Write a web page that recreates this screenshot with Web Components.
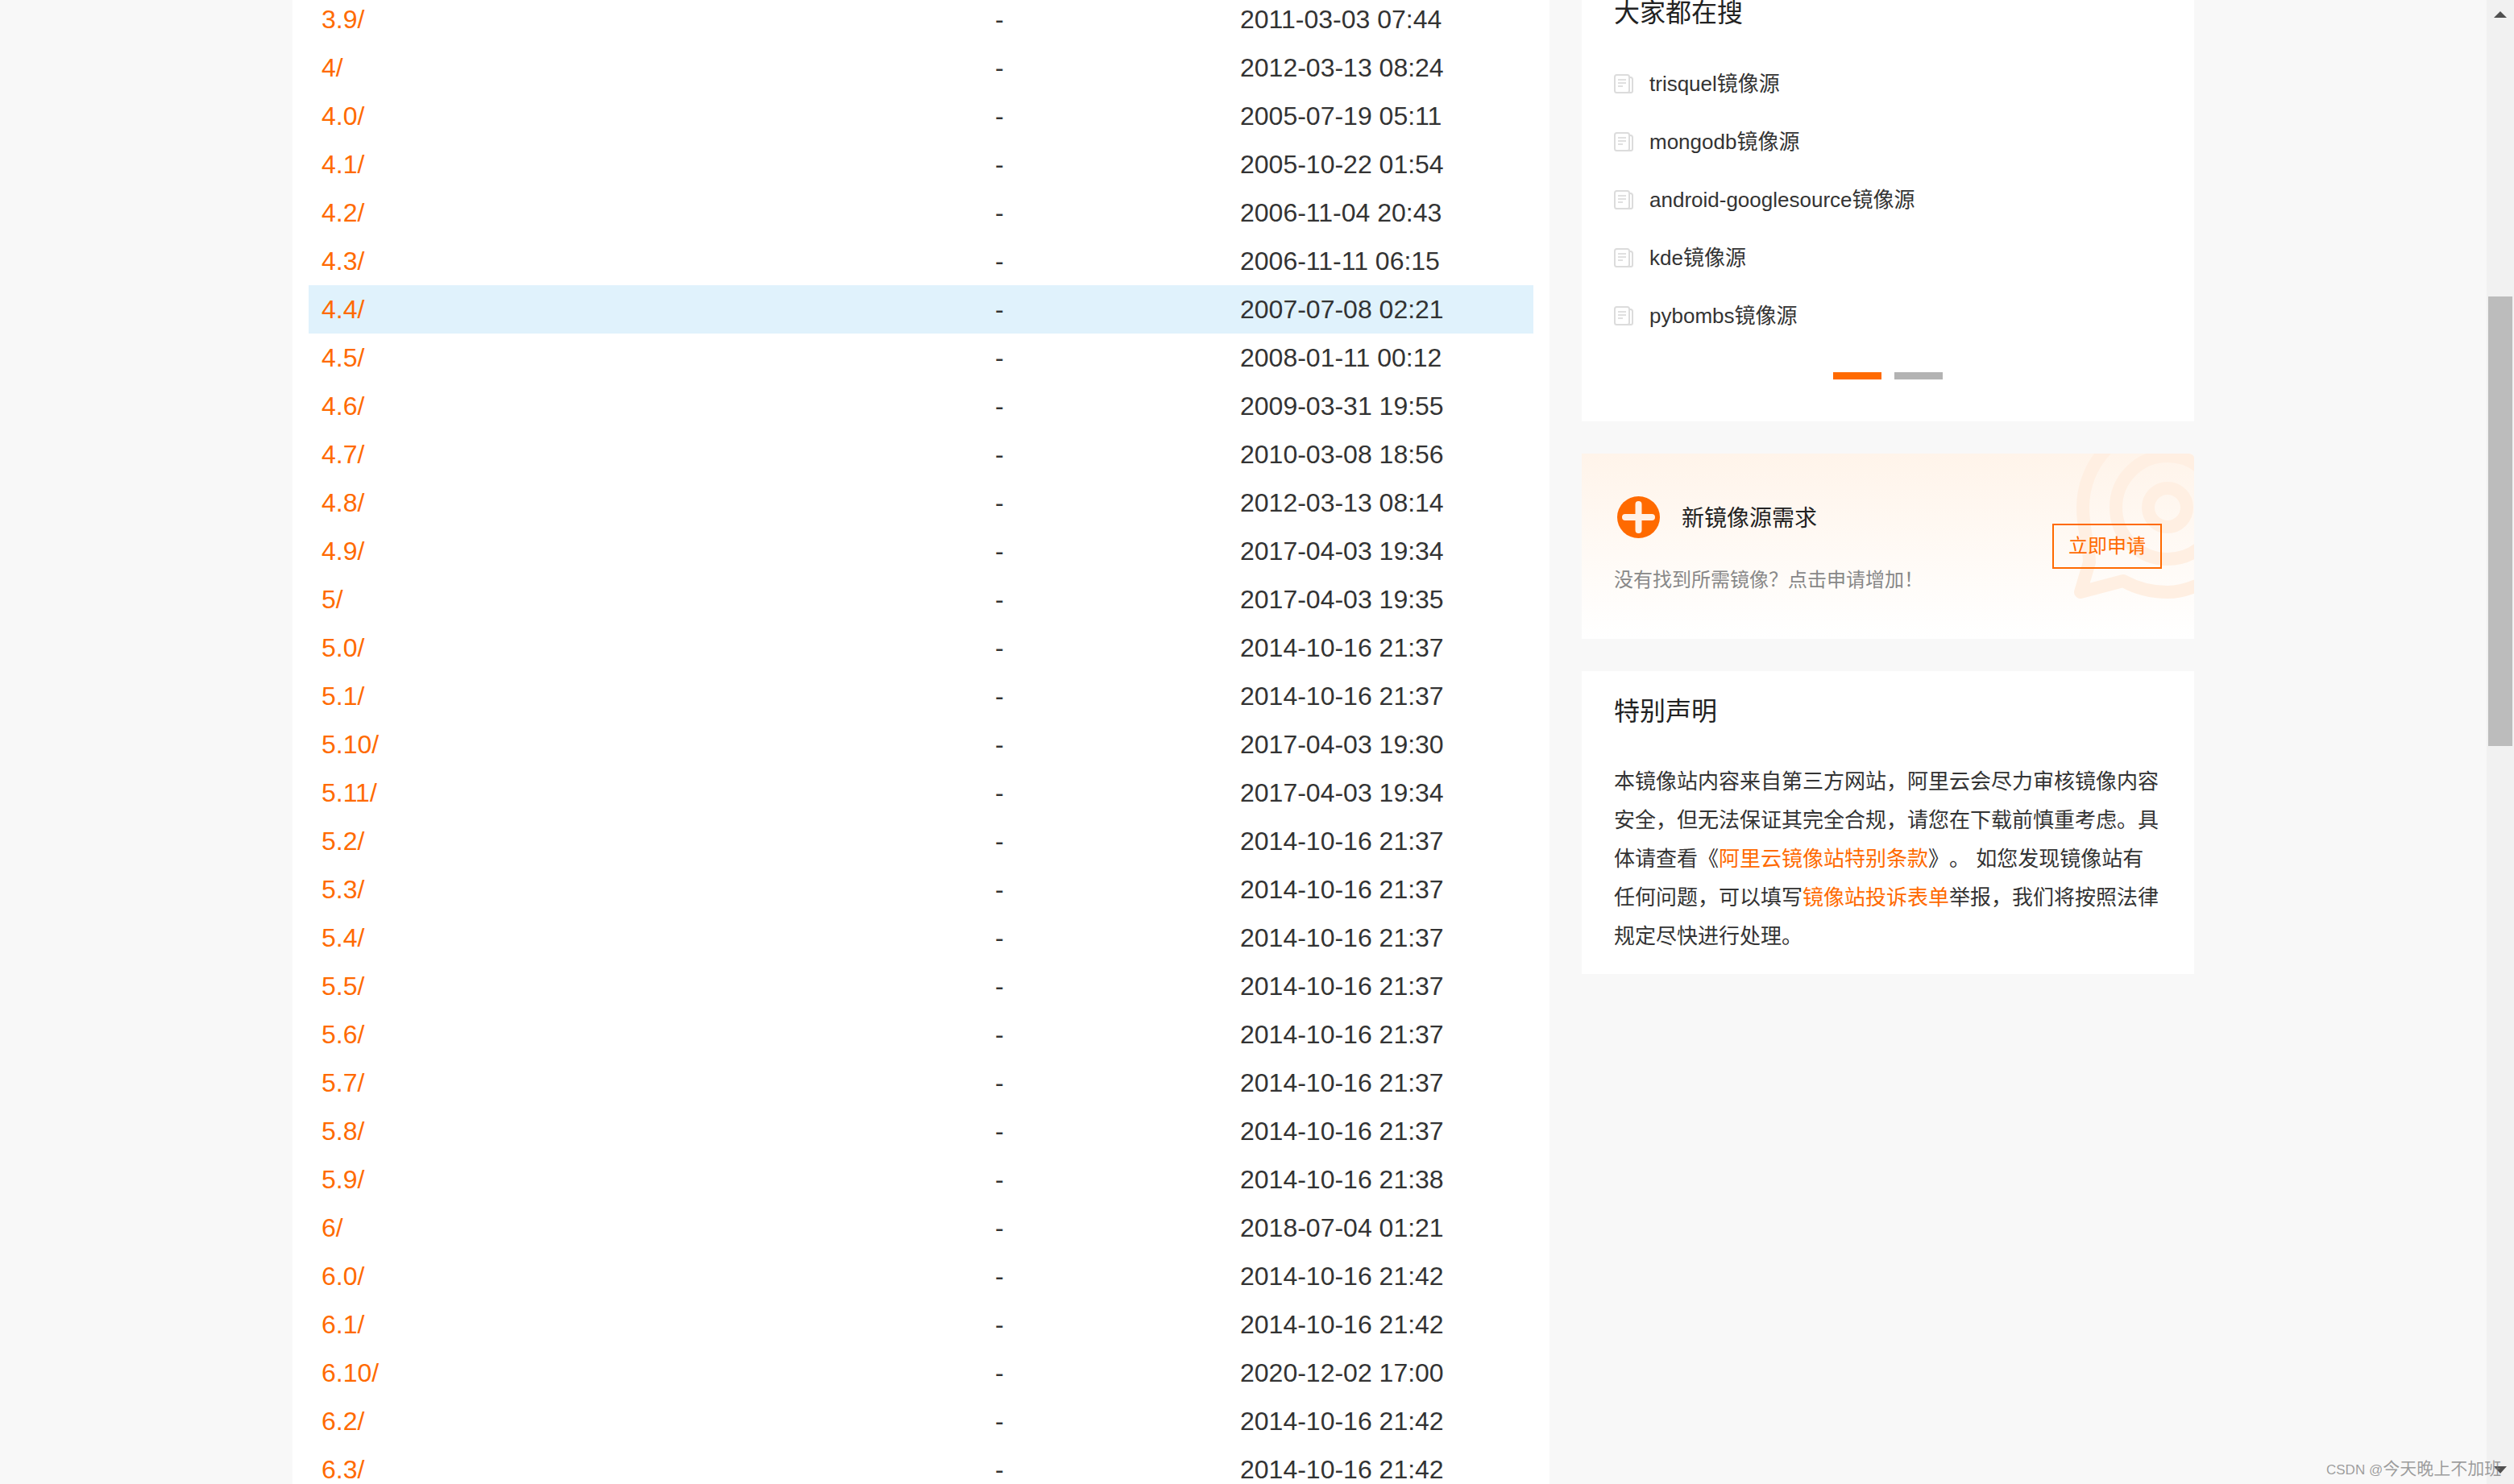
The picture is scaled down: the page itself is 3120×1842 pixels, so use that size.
<!DOCTYPE html>
<html lang="zh-CN">
<head>
<meta charset="utf-8">
<title>mirrors</title>
<style>
  html, body { margin: 0; height: 100%; overflow: hidden; background: #f8f8f8; }
  body { font-family: "Liberation Sans", "Noto Sans CJK SC", sans-serif; color: #333; }
</style>
</head>
<body>
<mirror-page>
  <file-table></file-table>
  <side-search slot="side"></side-search>
  <side-apply slot="side"></side-apply>
  <side-notice slot="side"></side-notice>
</mirror-page>

<script>
const FILES = [
  ['3.9/', '2011-03-03 07:44'], ['4/', '2012-03-13 08:24'], ['4.0/', '2005-07-19 05:11'],
  ['4.1/', '2005-10-22 01:54'], ['4.2/', '2006-11-04 20:43'], ['4.3/', '2006-11-11 06:15'],
  ['4.4/', '2007-07-08 02:21'], ['4.5/', '2008-01-11 00:12'], ['4.6/', '2009-03-31 19:55'],
  ['4.7/', '2010-03-08 18:56'], ['4.8/', '2012-03-13 08:14'], ['4.9/', '2017-04-03 19:34'],
  ['5/', '2017-04-03 19:35'], ['5.0/', '2014-10-16 21:37'], ['5.1/', '2014-10-16 21:37'],
  ['5.10/', '2017-04-03 19:30'], ['5.11/', '2017-04-03 19:34'], ['5.2/', '2014-10-16 21:37'],
  ['5.3/', '2014-10-16 21:37'], ['5.4/', '2014-10-16 21:37'], ['5.5/', '2014-10-16 21:37'],
  ['5.6/', '2014-10-16 21:37'], ['5.7/', '2014-10-16 21:37'], ['5.8/', '2014-10-16 21:37'],
  ['5.9/', '2014-10-16 21:38'], ['6/', '2018-07-04 01:21'], ['6.0/', '2014-10-16 21:42'],
  ['6.1/', '2014-10-16 21:42'], ['6.10/', '2020-12-02 17:00'], ['6.2/', '2014-10-16 21:42'],
  ['6.3/', '2014-10-16 21:42']
];
const SEARCHES = ['trisquel', 'mongodb', 'android-googlesource', 'kde', 'pybombs'];
const ORANGE = '#ff6a00';

class MirrorPage extends HTMLElement {
  constructor() {
    super();
    this.attachShadow({ mode: 'open' });
    this.shadowRoot.innerHTML = `
      <style>
        :host { display: flex; height: 1842px; overflow: hidden; background: #f8f8f8; }
        .view { flex: 1; min-width: 0; overflow: hidden; }
        .content { display: flex; justify-content: center; gap: 40px; margin-top: -46px; }
        .side { display: flex; flex-direction: column; gap: 40px; width: 760px; flex: none; }
      </style>
      <div class="view">
        <div class="content">
          <slot></slot>
          <div class="side"><slot name="side"></slot></div>
        </div>
      </div>
      <fake-scrollbar></fake-scrollbar>
      <csdn-mark></csdn-mark>
    `;
  }
}

class FileTable extends HTMLElement {
  constructor() {
    super();
    this.attachShadow({ mode: 'open' });
    this.shadowRoot.innerHTML = `
      <style>
        :host { display: block; width: 1560px; flex: none; background: #fff; padding: 40px 20px 0; box-sizing: border-box; }
      </style>
      ${FILES.map(f => `<file-row name="${f[0]}" date="${f[1]}"${f[0] === '4.4/' ? ' hot' : ''}></file-row>`).join('')}
    `;
  }
}

class FileRow extends HTMLElement {
  constructor() {
    super();
    this.attachShadow({ mode: 'open' });
  }

  connectedCallback() {
    this.shadowRoot.innerHTML = `
      <style>
        :host { display: grid; grid-template-columns: 852px 304px 1fr; height: 60px; font-size: 32px; line-height: 60px; color: #333; }
        :host([hot]) { background: #e0f2fc; }
        .name { padding-left: 16px; color: ${ORANGE}; }
      </style>
      <span class="name">${this.getAttribute('name')}</span>
      <span>-</span>
      <span>${this.getAttribute('date')}</span>
    `;
  }
}

class SideSearch extends HTMLElement {
  constructor() {
    super();
    this.attachShadow({ mode: 'open' });
    const doc = `<svg width="24" height="24" viewBox="0 0 24 24" fill="none" stroke="#dcdcdc" stroke-width="2">
        <rect x="1" y="1" width="18" height="22" rx="2.5"/>
        <path d="M19 4h1.5a2.5 2.5 0 0 1 2.5 2.5V21a2 2 0 0 1-2 2H17"/>
        <path d="M5 7h10M5 11h10M5 15h6" stroke="#e0e0e0"/>
      </svg>`;
    this.shadowRoot.innerHTML = `
      <style>
        :host { display: block; background: #fff; padding: 38px 40px 52px; }
        h3 { margin: 0 0 27px; font: inherit; font-size: 32px; line-height: 48px; color: #222; }
        .item { display: flex; align-items: center; gap: 20px; height: 72px; font-size: 26px; color: #333; }
        .item span { padding-bottom: 3px; }
        svg { flex: none; margin-top: 2px; }
        .dots { display: flex; justify-content: center; gap: 16px; margin-top: 35px; }
        .dots i { display: block; width: 60px; height: 9px; background: #b3b3b3; }
        .dots i:first-child { background: ${ORANGE}; }
      </style>
      <h3>大家都在搜</h3>
      ${SEARCHES.map(s => `<div class="item">${doc}<span>${s}镜像源</span></div>`).join('')}
      <div class="dots"><i></i><i></i></div>
    `;
  }
}

class SideApply extends HTMLElement {
  constructor() {
    super();
    this.attachShadow({ mode: 'open' });
    this.shadowRoot.innerHTML = `
      <style>
        :host { display: flex; align-items: flex-start; justify-content: space-between; position: relative; overflow: hidden;
          height: 230px; box-sizing: border-box; padding: 53px 40px 0; border-top-right-radius: 6px;
          background: linear-gradient(180deg, #fff4ea 0%, #ffffff 100%); }
        .bg { position: absolute; left: 0; top: 0; }
        .left, .btn { position: relative; }
        .head { display: flex; align-items: center; gap: 27px; padding-left: 4px; font-size: 28px; color: #222; }
        .head svg { flex: none; }
        .head span { padding-bottom: 3px; }
        .sub { margin-top: 34px; font-size: 24px; line-height: 36px; color: #888; }
        .btn { margin-top: 34px; width: 136px; height: 56px; box-sizing: border-box; border: 2px solid ${ORANGE};
          font-size: 24px; line-height: 52px; text-align: center; color: ${ORANGE}; }
      </style>
      <svg class="bg" width="760" height="230" viewBox="0 0 760 230" fill="none" stroke="#ffefe2" stroke-width="16" stroke-linejoin="round">
        <circle cx="727" cy="67" r="24"/>
        <circle cx="727" cy="67" r="64"/>
        <path d="M727 -38A105 105 0 0 0 622 67C622 95 630 115 630 135L619 172L672 158C690 168 708 172 727 172C770 172 832 130 832 67"/>
      </svg>
      <div class="left">
        <div class="head">
          <svg width="53" height="52" viewBox="0 0 53 52">
            <ellipse cx="26.5" cy="26" rx="26.5" ry="26" fill="${ORANGE}"/>
            <path d="M26.5 10v32M10 26h33" stroke="#fff1e6" stroke-width="8" stroke-linecap="round"/>
          </svg>
          <span>新镜像源需求</span>
        </div>
        <div class="sub">没有找到所需镜像？点击申请增加！</div>
      </div>
      <div class="btn">立即申请</div>
    `;
  }
}

class SideNotice extends HTMLElement {
  constructor() {
    super();
    this.attachShadow({ mode: 'open' });
    this.shadowRoot.innerHTML = `
      <style>
        :host { display: block; background: #fff; padding: 26px 40px 23px; }
        h3 { margin: 0 0 39px; font: inherit; font-size: 32px; line-height: 48px; color: #222; }
        p { margin: 0; font-size: 26px; line-height: 48px; color: #333; text-spacing-trim: space-all; }
        a { color: ${ORANGE}; text-decoration: none; }
      </style>
      <h3>特别声明</h3>
      <p>本镜像站内容来自第三方网站，阿里云会尽力审核镜像内容安全，但无法保证其完全合规，请您在下载前慎重考虑。具体请查看《<a>阿里云镜像站特别条款</a>》。 如您发现镜像站有任何问题，可以填写<a>镜像站投诉表单</a>举报，我们将按照法律规定尽快进行处理。</p>
    `;
  }
}

class FakeScrollbar extends HTMLElement {
  constructor() {
    super();
    this.attachShadow({ mode: 'open' });
    this.shadowRoot.innerHTML = `
      <style>
        :host { display: flex; flex-direction: column; width: 34px; flex: none; height: 1842px; background: #f1f1f1; }
        .up, .down { width: 0; height: 0; margin-left: 9px; border-left: 8px solid transparent; border-right: 8px solid transparent; }
        .up { margin-top: 14px; border-bottom: 8px solid #505050; }
        .thumb { width: 30px; height: 558px; margin: 346px 0 0 2px; background: #bcbcbc; }
        .down { margin-top: auto; margin-bottom: 13px; border-top: 9px solid #505050; }
      </style>
      <div class="up"></div>
      <div class="thumb"></div>
      <div class="down"></div>
    `;
  }
}

class CsdnMark extends HTMLElement {
  constructor() {
    super();
    this.attachShadow({ mode: 'open' });
    this.shadowRoot.innerHTML = `
      <style>
        :host { display: block; position: absolute; left: 2887px; top: 1809px; font-size: 21px; line-height: 28px; color: rgba(120, 120, 120, 0.72); white-space: nowrap; }
        span { font-size: 17px; }
      </style>
      <span>CSDN @</span>今天晚上不加班
    `;
  }
}

customElements.define('file-row', FileRow);
customElements.define('file-table', FileTable);
customElements.define('side-search', SideSearch);
customElements.define('side-apply', SideApply);
customElements.define('side-notice', SideNotice);
customElements.define('fake-scrollbar', FakeScrollbar);
customElements.define('csdn-mark', CsdnMark);
customElements.define('mirror-page', MirrorPage);
</script>
</body>
</html>
